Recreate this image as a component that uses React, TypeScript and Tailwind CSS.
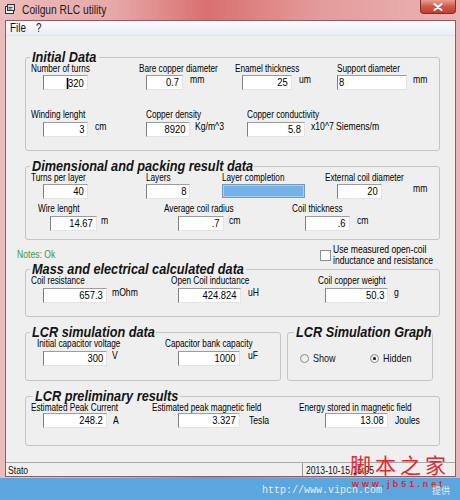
import React from 'react';

// Coilgun RLC utility — Win7 basic window, group boxes with fields
// text is drawn condensed (the screenshot is squeezed horizontally)

function T({ children, className, right }: { children: React.ReactNode; className?: string; right?: boolean }) {
  return (
    <span
      className={`inline-block whitespace-nowrap ${right ? 'origin-right' : 'origin-left'} scale-x-[0.82] ${className ?? ''}`}
    >
      {children}
    </span>
  );
}

interface BoxProps {
  w: string;
  value: string;
  left?: boolean;
  caret?: boolean;
}

function Box({ w, value, left, caret }: BoxProps) {
  return (
    <div
      className={`flex h-[15px] shrink-0 ${w} items-center overflow-hidden border border-t-[#9c9c9c] border-l-[#7f7f7f] border-r-[#e3e3e3] border-b-[#e3e3e3] bg-white text-[11.5px] leading-[13px] text-black ${left ? 'justify-start pl-[1px]' : 'justify-end pr-[3px]'}`}
    >
      <T right={!left}>
        {caret && <span className="inline-block h-[11px] w-[1.5px] translate-y-[2px] bg-black" />}
        {value}
      </T>
    </div>
  );
}

interface FieldProps {
  col?: string;
  label: string;
  pad: string;
  w: string;
  value: string;
  unit?: string;
  gap?: string;
  left?: boolean;
  caret?: boolean;
  mid?: boolean;
}

function Field({ col, label, pad, w, value, unit, gap, left, caret, mid }: FieldProps) {
  return (
    <div className={`shrink-0 ${col ?? ''}`}>
      <div className="h-[11px] text-[10px] leading-[11px] text-black">
        <T>{label}</T>
      </div>
      <div className={`flex ${mid ? 'items-center' : 'items-start'} ${pad}`}>
        <Box w={w} value={value} left={left} caret={caret} />
        {unit && (
          <span className={`text-[10.5px] leading-[11px] text-black ${mid ? '' : '-mt-px'} ${gap ?? ''}`}>
            <T>{unit}</T>
          </span>
        )}
      </div>
    </div>
  );
}

function Group({
  title,
  className,
  legend,
  children,
}: {
  title: string;
  className: string;
  legend: string;
  children: React.ReactNode;
}) {
  return (
    <fieldset className={`rounded-[3px] border border-[#c5c5c5] ${className}`}>
      <legend
        className={`${legend} overflow-visible px-[2px] text-[15.5px] font-bold italic leading-[12px] text-[#141414]`}
      >
        <T>{title}</T>
      </legend>
      {children}
    </fieldset>
  );
}

function Radio({ checked, label, className }: { checked?: boolean; label: string; className?: string }) {
  return (
    <div className={`flex items-center ${className ?? ''}`}>
      <span className="flex h-[9px] w-[9px] items-center justify-center rounded-full border border-[#8a8a8a] bg-[linear-gradient(135deg,#e2e2e2,#ffffff)]">
        {checked && <span className="h-[3px] w-[3px] rounded-full bg-black" />}
      </span>
      <span className="ml-[4px] text-[11px] leading-[12px]">
        <T>{label}</T>
      </span>
    </div>
  );
}

export default function App() {
  return (
    <div className="relative flex h-[500px] w-[460px] flex-col overflow-hidden bg-[#5aa6de] font-['Liberation_Sans',Arial,sans-serif] text-[#111]">
      {/* window frame */}
      <div className="flex h-[478px] flex-col bg-[linear-gradient(90deg,#ecbcbc_0%,#e7a7a7_25%,#d9706f_45%,#e49c9c_70%,#ebb3b3_100%)] pb-px pl-[5px] pr-[4px]">
        {/* title bar */}
        <div className="-ml-[5px] -mr-[4px] flex h-[20px] shrink-0 items-start">
          <svg className="ml-[5px] mt-[4px]" width="10" height="10" viewBox="0 0 10 10">
            <rect x="0.5" y="2.5" width="8" height="7" fill="#f4f4f4" stroke="#333" />
            <rect x="2.5" y="0.5" width="7" height="6" fill="#dcdcdc" stroke="#333" />
            <path d="M3.5 3.5h4M3.5 5h3" stroke="#555" />
          </svg>
          <span className="ml-[7px] mt-[3px] text-[12.5px] leading-[14px] text-[#1c1c1c]">
            <T>Coilgun RLC utility</T>
          </span>
          <div className="ml-auto mr-[4px] flex h-[14px] w-[36px] items-center justify-center rounded-b-[4px] border border-t-0 border-[#7d2f2f] bg-[linear-gradient(180deg,#e9a092_0%,#d2574a_50%,#c23f33_100%)]">
            <svg width="10" height="8" viewBox="0 0 10 8">
              <path d="M1.5 1l7 6M8.5 1l-7 6" stroke="#fff" strokeWidth="2" strokeLinecap="round" />
            </svg>
          </div>
        </div>

        {/* client */}
        <div className="flex flex-1 flex-col border border-[#9c5a5a] bg-[#efefef]">
          <div className="flex h-[15px] shrink-0 items-center border-b border-[#dfe3ea] bg-[linear-gradient(180deg,#fafbfd,#e9eef6)] text-[12px] leading-[13px]">
            <span className="ml-[4px] w-[26px]">
              <T>File</T>
            </span>
            <span>
              <T>?</T>
            </span>
          </div>

          {/* Initial Data */}
          <Group title="Initial Data" legend="ml-[4px] w-[69px]" className="ml-[19px] mt-[15px] w-[415px] pb-[13px]">
            <div className="ml-[5px] flex">
              <Field col="w-[108px]" label="Number of turns" pad="ml-[12px] mt-px" w="w-[45px]" value="320" caret />
              <Field col="w-[96px]" label="Bare copper diameter" pad="ml-[7px] mt-px" w="w-[37px]" value="0.7" unit="mm" gap="ml-[7px]" />
              <Field col="w-[102px]" label="Enamel thickness" pad="ml-[7px] mt-px" w="w-[50px]" value="25" unit="um" gap="ml-[7px]" />
              <Field label="Support diameter" pad="mt-px" w="w-[70px]" value="8" unit="mm" gap="ml-[6px]" left />
            </div>
            <div className="ml-[5px] mt-[19px] flex">
              <Field col="w-[115px]" label="Winding lenght" pad="ml-[12px] mt-[2px]" w="w-[45px]" value="3" unit="cm" gap="ml-[7px]" />
              <Field col="w-[101px]" label="Copper density" pad="mt-[2px]" w="w-[44px]" value="8920" unit="Kg/m^3" gap="ml-[5px]" />
              <Field label="Copper conductivity" pad="mt-[2px]" w="w-[58px]" value="5.8" unit="x10^7 Siemens/m" gap="ml-[6px]" />
            </div>
          </Group>

          {/* Dimensional and packing */}
          <Group
            title="Dimensional and packing result data"
            legend="ml-[4px] w-[224px]"
            className="ml-[19px] mt-[9px] w-[415px] pb-[8px]"
          >
            <div className="ml-[5px] flex">
              <Field col="w-[115px]" label="Turns per layer" pad="ml-[12px] mt-px" w="w-[45px]" value="40" />
              <Field col="w-[76px]" label="Layers" pad="mt-px" w="w-[44px]" value="8" />
              <div className="w-[103px] shrink-0">
                <div className="h-[11px] text-[10px] leading-[11px] text-black">
                  <T>Layer completion</T>
                </div>
                <div className="mt-px h-[14px] w-[83px] border border-[#7d97ad] bg-[#72b4ea] shadow-[inset_0_0_0_1px_#a3d0f4]" />
              </div>
              <Field label="External coil diameter" pad="ml-[12px] mt-px" w="w-[45px]" value="20" unit="mm" gap="ml-[31px]" />
            </div>
            <div className="ml-[12px] mt-[4px] flex">
              <Field col="w-[126px]" label="Wire lenght" pad="ml-[12px] mt-[2px]" w="w-[47px]" value="14.67" unit="m" gap="ml-[4px]" />
              <Field col="w-[128px]" label="Average coil radius" pad="ml-[14px] mt-[2px]" w="w-[46px]" value=".7" unit="cm" gap="ml-[5px]" />
              <Field label="Coil thickness" pad="ml-[13px] mt-[2px]" w="w-[45px]" value=".6" unit="cm" gap="ml-[7px]" />
            </div>
          </Group>

          {/* notes + checkbox */}
          <div className="ml-[11px] mt-[4px] flex h-[19px] shrink-0 items-start">
            <span className="mt-[5px] w-[315px] text-[10.5px] leading-[11px] text-[#3c9a3c]">
              <T>Notes: Ok</T>
            </span>
            <span className="mt-[6px] h-[11px] w-[11px] shrink-0 border border-[#8e8e8e] bg-white" />
            <div className="ml-[2px] text-[10.5px] leading-[11px] text-black">
              <T>
                Use measured open-coil
                <br />
                inductance and resistance
              </T>
            </div>
          </div>

          {/* Mass and electrical */}
          <Group
            title="Mass and electrical calculated data"
            legend="ml-[4px] w-[216px]"
            className="ml-[19px] w-[415px] pb-[13px]"
          >
            <div className="ml-[5px] flex">
              <Field col="w-[140px]" label="Coil resistance" pad="ml-[12px] mt-[2px]" w="w-[64px]" value="657.3" unit="mOhm" gap="ml-[5px]" />
              <Field col="w-[147px]" label="Open Coil inductance" pad="ml-[7px] mt-[2px]" w="w-[63px]" value="424.824" unit="uH" gap="ml-[7px]" />
              <Field label="Coil copper weight" pad="ml-[7px] mt-[2px]" w="w-[63px]" value="50.3" unit="g" gap="ml-[6px]" />
            </div>
          </Group>

          {/* LCR simulation */}
          <div className="ml-[19px] mt-[9px] flex">
            <Group title="LCR simulation data" legend="ml-[4px] w-[126px]" className="w-[256px] pb-[14px]">
              <div className="ml-[11px] flex">
                <Field col="w-[128px]" label="Initial capacitor voltage" pad="ml-[6px] mt-[2px]" w="w-[64px]" value="300" unit="V" gap="ml-[5px]" />
                <Field label="Capacitor bank capacity" pad="ml-[13px] mt-[2px]" w="w-[62px]" value="1000" unit="uF" gap="ml-[8px]" />
              </div>
            </Group>
            <Group title="LCR Simulation Graph" legend="ml-[6px] w-[138px]" className="ml-[6px] w-[146px]">
              <div className="ml-[12px] mt-[14px] flex">
                <Radio label="Show" className="w-[70px]" />
                <Radio label="Hidden" checked />
              </div>
            </Group>
          </div>

          {/* LCR preliminary */}
          <Group
            title="LCR preliminary results"
            legend="ml-[7px] w-[147px]"
            className="ml-[19px] mt-[9px] w-[415px] pb-[17px]"
          >
            <div className="ml-[5px] flex">
              <Field col="w-[121px]" label="Estimated Peak Current" pad="ml-[12px]" w="w-[64px]" value="248.2" unit="A" gap="ml-[6px]" mid />
              <Field col="w-[147px]" label="Estimated peak magnetic field" pad="ml-[26px]" w="w-[62px]" value="3.327" unit="Tesla" gap="ml-[9px]" mid />
              <Field label="Energy stored in magnetic field" pad="ml-[26px]" w="w-[63px]" value="13.08" unit="Joules" gap="ml-[7px]" mid />
            </div>
          </Group>

          <div className="flex-1" />

          {/* status bar */}
          <div className="flex h-[14px] shrink-0 border-t border-[#a9a9a9] text-[10.5px] leading-[12px]">
            <div className="w-[296px] pl-[2px] pt-px">
              <T>Stato</T>
            </div>
            <div className="flex-1 border-l border-[#9a9a9a] pl-[3px] pt-px">
              <T>2013-10-15 15:05</T>
            </div>
          </div>
        </div>
      </div>

      {/* watermark overlay */}
      <div className="absolute left-[350px] top-[452px] font-['Noto_Sans_CJK_SC',sans-serif] text-[21px] leading-[24px] tracking-[4px] text-[#e5272a]">
        脚本之家
      </div>
      <div className="absolute left-[262px] top-[485px] font-['Liberation_Mono',monospace] text-[10px] leading-[12px] text-[#e6ecf4]">
        http://www.vipcn.com
      </div>
      <div className="absolute left-[352px] top-[479px] text-[9px] font-bold leading-[10px] tracking-[3px] text-[#e5272a]">
        www.jb51.net
      </div>
      <div className="absolute left-[432px] top-[485px] font-['Noto_Sans_CJK_SC',sans-serif] text-[9px] leading-[12px] text-[#e6ecf4]">
        提供
      </div>
    </div>
  );
}
